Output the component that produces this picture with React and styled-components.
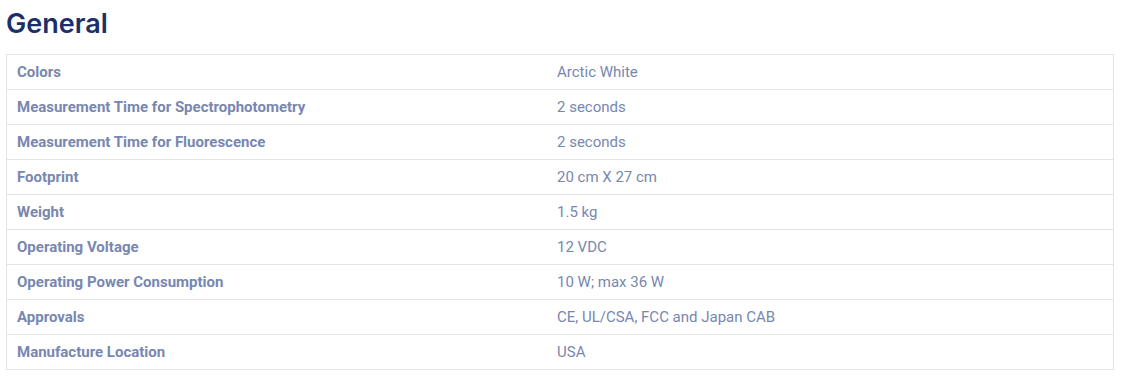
import React from "react";
import styled, { createGlobalStyle } from "styled-components";

const GlobalStyle = createGlobalStyle`
  body {
    margin: 0;
    background: #ffffff;
    font-family: Roboto, "Liberation Sans", sans-serif;
  }
`

const Page = styled.div`
  padding: 6px 17px 0 6px;
`

const Heading = styled.h2`
  margin: 0 0 12px 0;
  font-family: Inter, "Open Sans", sans-serif;
  font-weight: 600;
  font-size: 27px;
  line-height: 36px;
  letter-spacing: 0;
  color: #1b2f6a;
`

const Table = styled.table`
  width: 100%;
  border-collapse: collapse;
  border: 1px solid #e3e3e3;
`

const Cell = styled.td`
  height: 34px;
  padding: 0 10px;
  border-top: 1px solid #e3e3e3;
  font-size: 15px;
  color: #7887b0;
  font-weight: ${(p) => (p.$label ? 700 : 400)};
  width: ${(p) => (p.$label ? "520px" : "auto")};
`

const specs = [
  ["Colors", "Arctic White"],
  ["Measurement Time for Spectrophotometry", "2 seconds"],
  ["Measurement Time for Fluorescence", "2 seconds"],
  ["Footprint", "20 cm X 27 cm"],
  ["Weight", "1.5 kg"],
  ["Operating Voltage", "12 VDC"],
  ["Operating Power Consumption", "10 W; max 36 W"],
  ["Approvals", "CE, UL/CSA, FCC and Japan CAB"],
  ["Manufacture Location", "USA"],
];

export default function App() {
  return (
    <Page>
      <GlobalStyle />
      <Heading>General</Heading>
      <Table>
        <tbody>
          {specs.map(([k, v]) => (
            <tr key={k}>
              <Cell $label>{k}</Cell>
              <Cell>{v}</Cell>
            </tr>
          ))}
        </tbody>
      </Table>
    </Page>
  );
}
